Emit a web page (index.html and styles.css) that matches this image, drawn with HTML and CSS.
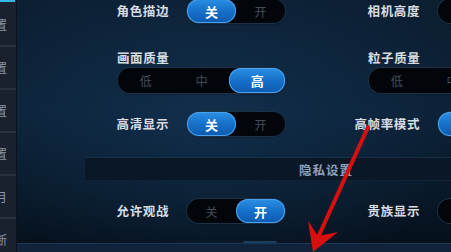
FILE: index.html
```html
<!DOCTYPE html>
<html lang="zh">
<head>
<meta charset="utf-8">
<link rel="stylesheet" href="styles.css">
</head>
<body>
<div class="app">
  <nav class="sidebar">
    <div class="side-top"></div>
    <div class="side-item">设置</div>
    <div class="side-item">设置</div>
    <div class="side-item">设置</div>
    <div class="side-item">设置</div>
    <div class="side-item">日月</div>
    <div class="side-item">推断</div>
  </nav>
  <main class="content">
    <div class="cols row first">
      <div class="setting">
        <span class="label">角色描边</span>
        <div class="toggle"><span class="seg on">关</span><span class="seg">开</span></div>
      </div>
      <div class="setting">
        <span class="label">相机高度</span>
        <div class="toggle"><span class="seg">低</span><span class="seg">高</span></div>
      </div>
    </div>

    <div class="cols block">
      <div class="stack">
        <span class="top-label">画面质量</span>
        <div class="toggle tri"><span class="seg">低</span><span class="seg">中</span><span class="seg on">高</span></div>
      </div>
      <div class="stack">
        <span class="top-label">粒子质量</span>
        <div class="toggle tri"><span class="seg">低</span><span class="seg">中</span><span class="seg on">高</span></div>
      </div>
    </div>

    <div class="cols row third">
      <div class="setting">
        <span class="label">高清显示</span>
        <div class="toggle"><span class="seg on">关</span><span class="seg">开</span></div>
      </div>
      <div class="setting">
        <span class="label">高帧率模式</span>
        <div class="toggle"><span class="seg on">关</span><span class="seg">开</span></div>
      </div>
    </div>

    <div class="section"><span>隐私设置</span></div>

    <div class="cols row fourth">
      <div class="setting">
        <span class="label">允许观战</span>
        <div class="toggle"><span class="seg">关</span><span class="seg on">开</span></div>
      </div>
      <div class="setting">
        <span class="label">贵族显示</span>
        <div class="toggle"><span class="seg">关</span><span class="seg on">开</span></div>
      </div>
    </div>

    <div class="bottom-bar"><span class="peek"></span></div>
  </main>
</div>
<svg class="arrow" width="451" height="252" viewBox="0 0 451 252">
  <line x1="368" y1="127" x2="316" y2="242" stroke="#d80f0f" stroke-width="4" stroke-linecap="round"/>
  <polygon points="313,252 308,221 318,236 338,232" fill="#d80f0f"/>
</svg>
</body>
</html>
```

FILE: styles.css
```css
* { box-sizing: border-box; }

html, body {
  margin: 0;
  padding: 0;
  width: 451px;
  height: 252px;
  overflow: hidden;
  background: #07121e;
  font-family: "Noto Sans CJK SC", "Noto Sans", sans-serif;
}

.app {
  display: flex;
  width: 451px;
  height: 252px;
  overflow: hidden;
}

.sidebar {
  flex: 0 0 17px;
  width: 17px;
  background: #1a212e;
  border-right: 1px solid #0a121d;
  display: flex;
  flex-direction: column;
  overflow: hidden;
}

.side-top {
  flex: 0 0 4px;
  border-top: 2px solid #35b8e8;
  margin-right: 1px;
}

.side-item {
  flex: 0 0 43px;
  display: flex;
  align-items: center;
  justify-content: flex-end;
  padding-right: 9px;
  white-space: nowrap;
  font-size: 12px;
  color: #8d96a3;
  border-bottom: 2px solid #283141;
  overflow: hidden;
}

.content {
  flex: 1 1 auto;
  min-width: 0;
  position: relative;
  display: flex;
  flex-direction: column;
  overflow: hidden;
  background:
    radial-gradient(ellipse 260px 170px at 190px 120px, rgba(22, 60, 96, 0.5), rgba(22, 60, 96, 0) 100%),
    linear-gradient(180deg, #0c1e31 0%, #0c2137 45%, #081726 80%, #050f1a 100%);
}

.cols {
  display: grid;
  grid-template-columns: 251px 251px;
  padding-left: 82px;
  width: 600px;
  flex: 0 0 auto;
}

.row.first { margin-top: -1px; }
.block { margin-top: 27px; }
.row.third { margin-top: 19px; }
.row.fourth { margin-top: 18px; }

.setting {
  display: flex;
  align-items: center;
  gap: 18px;
}

.label {
  width: 70px;
  text-align: right;
  font-size: 12.5px;
  font-weight: 700;
  letter-spacing: 0.6px;
  color: #d8dde2;
  white-space: nowrap;
  line-height: 16px;
}

.stack {
  display: flex;
  flex-direction: column;
  padding-left: 18px;
}

.top-label {
  font-size: 12.5px;
  font-weight: 700;
  letter-spacing: 0.6px;
  color: #d8dde2;
  line-height: 16px;
  margin-bottom: 2px;
}

.toggle {
  display: flex;
  width: 98px;
  height: 24px;
  border-radius: 12px;
  background: #02060b;
  box-shadow: 0 0 0 1px #1c3046, 0 1px 2px rgba(0, 0, 0, 0.5);
}

.toggle.tri {
  width: 167px;
  height: 25px;
  margin-left: 1px;
}

.seg {
  flex: 1 1 0;
  display: flex;
  align-items: center;
  justify-content: center;
  font-size: 12px;
  color: #434d58;
  border-radius: 12px;
}

.seg.on {
  color: #ffffff;
  font-size: 13px;
  font-weight: 700;
  background: linear-gradient(180deg, #2b8fe4 0%, #1670c9 50%, #0c5aaf 100%);
  box-shadow: inset 0 0 0 1px #4aa2ee;
}

.section {
  margin-top: 21px;
  margin-left: 68px;
  width: 482px;
  height: 24px;
  flex: 0 0 24px;
  display: flex;
  align-items: center;
  justify-content: center;
  background: #0a1727;
  border-top: 1px solid #173049;
  border-bottom: 1px solid #0f2335;
  color: #8aa2ba;
  font-size: 12.5px;
  font-weight: 700;
  letter-spacing: 1px;
}

.bottom-bar {
  margin-top: 20px;
  flex: 0 0 12px;
  background: #10233a;
  border-top: 1px solid #1a3650;
  position: relative;
}

.peek {
  display: block;
  margin-left: 226px;
  margin-top: -3px;
  width: 34px;
  height: 2px;
  background: #1d3d5a;
  border-radius: 1px;
}

.arrow {
  position: absolute;
  left: 0;
  top: 0;
  pointer-events: none;
}
```
